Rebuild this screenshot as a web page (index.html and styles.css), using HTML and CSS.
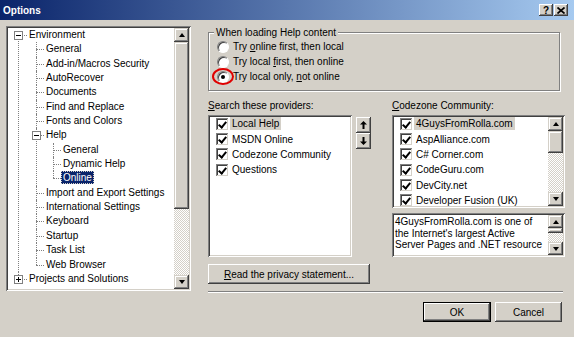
FILE: index.html
```html
<!DOCTYPE html>
<html lang="en">
<head>
    <meta charset="UTF-8">
    <title>Options</title>
    <link rel="stylesheet" href="styles.css">
</head>
<body>
<div class="window">
    <div class="titlebar">
        <span class="title">Options</span>
        <div class="caption">
            <span class="cap-btn">?</span>
            <span class="cap-btn"><svg width="8" height="7" viewBox="0 0 8 7"><path d="M0.5 0.5 L7.5 6.5 M7.5 0.5 L0.5 6.5" stroke="#000" stroke-width="1.7"/></svg></span>
        </div>
    </div>

    <div class="content">
        <!-- left: category tree -->
        <div class="tree sunken">
            <div class="tree-body">
                <ul class="tree-root">
                    <li class="first">
                        <div class="row"><span class="exp"></span>Environment</div>
                        <ul class="l1">
                            <li><div class="row">General</div></li>
                            <li><div class="row">Add-in/Macros Security</div></li>
                            <li><div class="row">AutoRecover</div></li>
                            <li><div class="row">Documents</div></li>
                            <li><div class="row">Find and Replace</div></li>
                            <li><div class="row">Fonts and Colors</div></li>
                            <li>
                                <div class="row"><span class="exp"></span>Help</div>
                                <ul class="l2">
                                    <li><div class="row">General</div></li>
                                    <li><div class="row">Dynamic Help</div></li>
                                    <li class="last"><div class="row"><span class="sel">Online</span></div></li>
                                </ul>
                            </li>
                            <li><div class="row">Import and Export Settings</div></li>
                            <li><div class="row">International Settings</div></li>
                            <li><div class="row">Keyboard</div></li>
                            <li><div class="row">Startup</div></li>
                            <li><div class="row">Task List</div></li>
                            <li class="last"><div class="row">Web Browser</div></li>
                        </ul>
                    </li>
                    <li class="last"><div class="row"><span class="exp plus"></span>Projects and Solutions</div></li>
                </ul>
            </div>
            <div class="vscroll">
                <span class="sb-btn"><i class="tri up"></i></span>
                <span class="sb-thumb"></span>
                <span class="sb-track"></span>
                <span class="sb-btn"><i class="tri down"></i></span>
            </div>
        </div>

        <!-- right: online help settings -->
        <div class="panel">
            <fieldset class="group">
                <legend>When loading Help content</legend>
                <div class="radios">
                    <div class="radio-row"><span class="radio"></span><span>Try <u>o</u>nline first, then local</span></div>
                    <div class="radio-row"><span class="radio"></span><span>Try local <u>f</u>irst, then online</span></div>
                    <div class="radio-row"><span class="radio checked"><span class="mark"></span></span><span>Try local only, <u>n</u>ot online</span></div>
                </div>
            </fieldset>

            <div class="lists">
                <div class="col-left">
                    <div class="label"><u>S</u>earch these providers:</div>
                    <div class="prov-wrap">
                        <div class="listbox providers sunken">
                            <div class="item"><span class="chk"></span><span class="txt hl">Local Help</span></div>
                            <div class="item"><span class="chk"></span><span class="txt">MSDN Online</span></div>
                            <div class="item"><span class="chk"></span><span class="txt">Codezone Community</span></div>
                            <div class="item"><span class="chk"></span><span class="txt">Questions</span></div>
                        </div>
                        <div class="order">
                            <span class="order-btn"><svg width="7" height="8" viewBox="0 0 7 8"><path d="M3.5 0 L7 3.5 H4.5 V8 H2.5 V3.5 H0 Z"/></svg></span>
                            <span class="order-btn"><svg width="7" height="8" viewBox="0 0 7 8"><path d="M3.5 8 L7 4.5 H4.5 V0 H2.5 V4.5 H0 Z"/></svg></span>
                        </div>
                    </div>
                </div>

                <div class="col-right">
                    <div class="label"><u>C</u>odezone Community:</div>
                    <div class="listbox cz sunken">
                        <div class="cz-items">
                            <div class="item"><span class="chk"></span><span class="txt hl">4GuysFromRolla.com</span></div>
                            <div class="item"><span class="chk"></span><span class="txt">AspAlliance.com</span></div>
                            <div class="item"><span class="chk"></span><span class="txt">C# Corner.com</span></div>
                            <div class="item"><span class="chk"></span><span class="txt">CodeGuru.com</span></div>
                            <div class="item"><span class="chk"></span><span class="txt">DevCity.net</span></div>
                            <div class="item"><span class="chk"></span><span class="txt">Developer Fusion (UK)</span></div>
                        </div>
                        <div class="vscroll">
                            <span class="sb-btn"><i class="tri up"></i></span>
                            <span class="sb-thumb"></span>
                            <span class="sb-track"></span>
                            <span class="sb-btn"><i class="tri down"></i></span>
                        </div>
                    </div>
                    <div class="desc sunken">
                        <div class="desc-text">4GuysFromRolla.com is one of<br>the Internet's largest Active<br>Server Pages and .NET resource</div>
                        <div class="vscroll">
                            <span class="sb-btn"><i class="tri up"></i></span>
                            <span class="sb-thumb"></span>
                            <span class="sb-track"></span>
                            <span class="sb-btn"><i class="tri down"></i></span>
                        </div>
                    </div>
                </div>
            </div>

            <button class="btn privacy"><span><u>R</u>ead the privacy statement...</span></button>
            <div class="separator"></div>
            <div class="actions">
                <button class="btn ok">OK</button>
                <button class="btn cancel">Cancel</button>
            </div>
        </div>
    </div>
</div>
</body>
</html>
```

FILE: styles.css
```css
* {
    box-sizing: border-box;
}

body {
    margin: 0;
    background-color: #d4d0c8;
    font-family: "Liberation Sans", Arial, sans-serif;
    font-size: 10px;
    color: #000;
}

.window {
    width: 574px;
    height: 337px;
    overflow: hidden;
}

/* title bar */
.titlebar {
    height: 20px;
    display: flex;
    align-items: center;
    justify-content: space-between;
    padding: 0 6px 0 3px;
    background: linear-gradient(to right, #0a246a, #a6caf0);
}

.title {
    color: #fff;
    font-weight: bold;
    font-size: 10px;
}

.caption {
    display: flex;
    gap: 1px;
}

.cap-btn {
    width: 14px;
    height: 12px;
    display: flex;
    align-items: center;
    justify-content: center;
    font-weight: bold;
    font-size: 10px;
    background-color: #d4d0c8;
    box-shadow: inset -1px -1px #404040, inset 1px 1px #fff, inset -2px -2px #808080;
}

/* shared 3d edges */
.sunken {
    box-shadow: inset 1px 1px #808080, inset -1px -1px #fff, inset 2px 2px #404040, inset -2px -2px #d4d0c8;
}

.content {
    display: flex;
    padding: 6px 0 0 6px;
}

/* tree */
.tree {
    width: 185px;
    height: 265px;
    display: flex;
    padding: 2px;
    background-color: #fff;
}

.tree-body {
    flex: 1;
    overflow: hidden;
}

.tree-root,
.tree-root ul {
    list-style: none;
    margin: 0;
    padding: 0;
}

.tree-root li {
    position: relative;
}

.tree-root li::after {
    content: "";
    position: absolute;
    top: 0;
    bottom: 0;
    border-left: 1px dotted #808080;
}

.tree-root li.last::after {
    bottom: auto;
    height: 7px;
}

.tree-root > li.first::after {
    top: 7px;
}

.row {
    position: relative;
    height: 14.35px;
    line-height: 14.35px;
    white-space: nowrap;
}

.row::before {
    content: "";
    position: absolute;
    top: 7px;
    border-top: 1px dotted #808080;
}

.tree-root > li::after { left: 10px; }
.tree-root > li > .row { padding-left: 21px; }
.tree-root > li > .row::before { left: 10px; width: 9px; }
.tree-root > li > .row > .exp { left: 6px; }

.l1 > li::after { left: 28px; }
.l1 > li > .row { padding-left: 38px; }
.l1 > li > .row::before { left: 28px; width: 8px; }
.l1 > li > .row > .exp { left: 24px; }

.l2 > li::after { left: 45px; }
.l2 > li > .row { padding-left: 55px; }
.l2 > li > .row::before { left: 45px; width: 8px; }

.exp {
    position: absolute;
    top: 3px;
    width: 9px;
    height: 9px;
    border: 1px solid #808080;
    background-color: #fff;
    z-index: 1;
}

.exp::before {
    content: "";
    position: absolute;
    left: 1px;
    top: 3px;
    width: 5px;
    height: 1px;
    background-color: #000;
}

.exp.plus::after {
    content: "";
    position: absolute;
    left: 3px;
    top: 1px;
    width: 1px;
    height: 5px;
    background-color: #000;
}

.sel {
    display: inline-block;
    line-height: 13px;
    margin-left: -2px;
    padding: 0 2px;
    color: #fff;
    background-color: #0a246a;
    outline: 1px dotted #d4d0c8;
    outline-offset: -1px;
}

/* scrollbars */
.vscroll {
    width: 15px;
    flex: none;
    display: flex;
    flex-direction: column;
    background: repeating-conic-gradient(#fff 0 25%, #d4d0c8 0 50%) 0 0 / 2px 2px;
}

.sb-btn,
.sb-thumb {
    flex: none;
    background-color: #d4d0c8;
    box-shadow: inset -1px -1px #404040, inset 1px 1px #d4d0c8, inset -2px -2px #808080, inset 2px 2px #fff;
}

.sb-btn {
    height: 14px;
    display: flex;
    align-items: center;
    justify-content: center;
}

.sb-track {
    flex: 1;
}

.tree .sb-thumb { height: 167px; }
.cz .sb-thumb { height: 22px; }
.desc .sb-btn { height: 13px; }
.desc .sb-thumb { height: 5px; }

.tri {
    width: 1px;
    height: 0;
    border-left: 3px solid transparent;
    border-right: 3px solid transparent;
}

.tri.up { border-bottom: 4px solid #000; }
.tri.down { border-top: 4px solid #000; }

/* right panel */
.panel {
    margin-left: 17px;
    width: 357px;
    display: flex;
    flex-direction: column;
}

.group {
    margin: 0;
    width: 352px;
    padding: 0 0 6px 5px;
    border: 1px solid #808080;
    box-shadow: inset 1px 1px #fff, 1px 1px #fff;
}

.group legend {
    padding: 0 2px;
    line-height: 13px;
    background-color: #d4d0c8;
}

.radios {
    padding-left: 3px;
}

.radio-row {
    display: flex;
    align-items: center;
    gap: 4px;
    height: 15px;
}

.radio {
    position: relative;
    width: 12px;
    height: 12px;
    display: flex;
    align-items: center;
    justify-content: center;
    border-radius: 50%;
    background-color: #fff;
    border: 1px solid;
    border-color: #808080 #fff #fff #808080;
    box-shadow: inset 1px 1px #404040;
}

.radio.checked::after {
    content: "";
    width: 4px;
    height: 4px;
    border-radius: 50%;
    background-color: #000;
}

.mark {
    position: absolute;
    left: -6px;
    top: -4px;
    width: 22px;
    height: 17px;
    border: 2px solid #e00000;
    border-radius: 50%;
}

.lists {
    display: flex;
    gap: 21px;
    margin-top: 8px;
}

.col-left { width: 163px; }
.col-right { width: 173px; }

.label {
    line-height: 13px;
    margin-bottom: 3px;
}

.prov-wrap {
    display: flex;
    gap: 4px;
}

.listbox {
    background-color: #fff;
}

.providers {
    width: 144px;
    height: 142px;
    padding: 1px 2px;
}

.order {
    display: flex;
    flex-direction: column;
    margin-top: 2px;
}

.order-btn {
    width: 15px;
    height: 16px;
    display: flex;
    align-items: center;
    justify-content: center;
    background-color: #d4d0c8;
    box-shadow: inset -1px -1px #404040, inset 1px 1px #fff, inset -2px -2px #808080;
}

.item {
    display: flex;
    align-items: center;
    gap: 2px;
    height: 15.35px;
    padding-left: 6px;
    white-space: nowrap;
}

.chk {
    position: relative;
    width: 12px;
    height: 12px;
    flex: none;
    background-color: #fff;
    box-shadow: inset 1px 1px #808080, inset -1px -1px #d4d0c8, inset 2px 2px #404040;
}

.chk::after {
    content: "";
    position: absolute;
    left: 4px;
    top: 2px;
    width: 3px;
    height: 6px;
    border-right: 2px solid #000;
    border-bottom: 2px solid #000;
    transform: rotate(40deg);
}

.txt {
    padding: 0 2px;
    line-height: 13px;
}

.txt.hl {
    background-color: #d4d0c8;
}

.cz {
    display: flex;
    height: 93px;
    padding: 2px;
}

.cz-items {
    flex: 1;
    overflow: hidden;
    margin-top: -1px;
}

.desc {
    display: flex;
    height: 44px;
    margin-top: 5px;
    padding: 2px;
    background-color: #fff;
}

.desc-text {
    flex: 1;
    padding: 1px 0 0 1px;
    line-height: 11.5px;
    white-space: nowrap;
    overflow: hidden;
}

/* buttons */
.btn {
    height: 20px;
    padding: 0;
    border: 0;
    display: flex;
    align-items: center;
    justify-content: center;
    font: inherit;
    color: #000;
    background-color: #d4d0c8;
    box-shadow: inset -1px -1px #404040, inset 1px 1px #fff, inset -2px -2px #808080;
}

.privacy {
    width: 162px;
    margin-top: 7px;
}

.separator {
    width: 355px;
    height: 2px;
    margin-top: 7px;
    border-top: 1px solid #808080;
    border-bottom: 1px solid #fff;
}

.actions {
    display: flex;
    justify-content: flex-end;
    gap: 4px;
    margin-top: 9px;
    padding-right: 3px;
}

.ok {
    width: 68px;
    box-shadow: inset 0 0 0 1px #000, inset -2px -2px #404040, inset 2px 2px #fff, inset -3px -3px #808080;
}

.cancel {
    width: 67px;
}
```
